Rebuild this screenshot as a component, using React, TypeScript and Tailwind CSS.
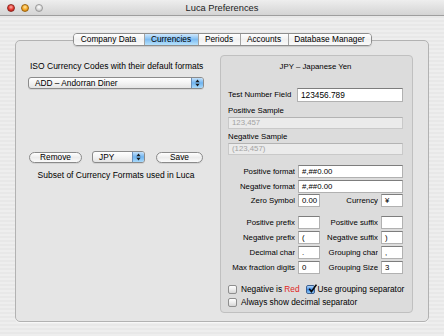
import React from 'react';

const tabs = [
  { label: 'Company Data', w: 'w-[70px]' },
  { label: 'Currencies', w: 'w-[54px]', active: true },
  { label: 'Periods', w: 'w-[42px]' },
  { label: 'Accounts', w: 'w-[48px]' },
  { label: 'Database Manager', w: 'w-[83px]' },
];

function Arrows() {
  return (
    <svg width="5" height="8" viewBox="0 0 5 8">
      <path d="M2.5 0.5 L4.6 3.2 L0.4 3.2 Z" fill="#1a1a1a" />
      <path d="M2.5 7.5 L4.6 4.8 L0.4 4.8 Z" fill="#1a1a1a" />
    </svg>
  );
}

function Popup({ label, className = '' }: { label: string; className?: string }) {
  return (
    <div
      className={`flex h-[12px] items-stretch overflow-hidden rounded-[3px] border border-[#8b8b8b] bg-gradient-to-b from-white via-[#f3f3f3] to-[#e4e4e4] shadow-[0_1px_0_rgba(0,0,0,0.08)] ${className}`}
    >
      <span className="flex-1 truncate pl-[6px] text-[8.3px] leading-[10px]">{label}</span>
      <span className="flex w-[12px] items-center justify-center border-l border-[#6c8fb8] bg-gradient-to-b from-[#c4e1fa] via-[#6fb4f0] to-[#a9dafb]">
        <Arrows />
      </span>
    </div>
  );
}

function Button({ label, className = '' }: { label: string; className?: string }) {
  return (
    <div
      className={`flex h-[11px] items-center justify-center rounded-full border border-[#8a8a8a] bg-gradient-to-b from-white via-[#ececec] to-[#fbfbfb] text-[8.3px] leading-[10px] shadow-[0_1px_0_rgba(0,0,0,0.08)] ${className}`}
    >
      {label}
    </div>
  );
}

function Field({ value = '', className = '' }: { value?: string; className?: string }) {
  return (
    <div
      className={`h-[13px] border border-[#b1b1b1] border-t-[#7d7d7d] bg-white pl-[3px] text-[7.8px] leading-[11px] ${className}`}
    >
      {value}
    </div>
  );
}

function SampleField({ value }: { value: string }) {
  return (
    <div className="h-[12px] border border-[#c9c9c9] border-t-[#b3b3b3] bg-[#ebebeb] pl-[3px] text-[7.8px] leading-[10px] text-[#a3a3a3]">
      {value}
    </div>
  );
}

function Checkbox({ checked = false }: { checked?: boolean }) {
  if (checked) {
    return (
      <span className="relative flex h-[9px] w-[9px] shrink-0 items-center justify-center rounded-[2px] border border-[#3d5f8f] bg-gradient-to-b from-[#b5dafb] via-[#3f8ae4] to-[#8cc8f7]">
        <svg width="9" height="9" viewBox="0 0 9 9" className="absolute -top-[2px] left-[1px]">
          <path d="M1.2 4.8 L3.4 7.6 L8.4 0.6" stroke="#0b0b0b" strokeWidth="1.6" fill="none" />
        </svg>
      </span>
    );
  }
  return (
    <span className="h-[9px] w-[9px] shrink-0 rounded-[2px] border border-[#8e8e8e] bg-gradient-to-b from-white via-[#ededed] to-[#d6d6d6]" />
  );
}

function Label({ children }: { children: React.ReactNode }) {
  return <span className="truncate text-right text-[7.8px] leading-[13px]">{children}</span>;
}

export default function App() {
  return (
    <div className="h-[336px] w-[444px] overflow-hidden bg-[image:repeating-linear-gradient(0deg,#eeeeee_0px,#eeeeee_2px,#e8e8e8_2px,#e8e8e8_4px)] font-['Liberation_Sans',Arial,sans-serif] text-black">
      {/* title bar */}
      <div className="grid h-[16px] grid-cols-[60px_1fr_60px] items-center border-b border-[#9e9e9e] bg-gradient-to-b from-[#eeeeee] to-[#d4d4d4]">
        <div className="flex items-center gap-[6px] pl-[7px]">
          <span className="h-[8px] w-[8px] rounded-full border border-[#8c2a24] bg-[radial-gradient(circle_at_50%_35%,#ffb0a8,#e5332a_55%,#a0160f)]" />
          <span className="h-[8px] w-[8px] rounded-full border border-[#9a6410] bg-[radial-gradient(circle_at_50%_35%,#ffe6a0,#f5a623_55%,#b86e05)]" />
          <span className="h-[8px] w-[8px] rounded-full border border-[#9a9a9a] bg-[radial-gradient(circle_at_50%_35%,#ffffff,#d8d8d8_55%,#b0b0b0)]" />
        </div>
        <div className="text-center text-[9.3px] leading-[12px] text-[#222]">Luca Preferences</div>
        <div />
      </div>

      <div className="px-[15px] pt-[17px]">
        {/* tabs */}
        <div className="relative z-10 flex justify-center">
          <div className="flex h-[13px] overflow-hidden rounded-[4px] border border-[#8d8d8d] shadow-[0_1px_1px_rgba(0,0,0,0.12)]">
            {tabs.map((t, i) => (
              <div
                key={t.label}
                className={`${t.w} flex items-center justify-center text-[8.3px] leading-[11px] ${i > 0 ? 'border-l border-[#a3a3a3]' : ''} ${
                  t.active
                    ? 'bg-gradient-to-b from-[#cfe8fc] via-[#7fbdf2] to-[#b7e2fc]'
                    : 'bg-gradient-to-b from-white via-[#f1f1f1] to-[#fafafa]'
                }`}
              >
                {t.label}
              </div>
            ))}
          </div>
        </div>

        {/* tab panel */}
        <div className="-mt-[6px] flex h-[282px] gap-[16px] rounded-[5px] border border-[#b2b2b2] bg-[#e5e5e5] pl-[12px] pr-[15px] pt-[14px] shadow-[0_1px_0_rgba(255,255,255,0.6)]">
          {/* left column */}
          <div className="flex w-[176px] flex-col">
            <div className="mt-[6px] h-[10px] whitespace-nowrap pl-[2px] text-[8.5px] leading-[10px]">ISO Currency Codes with their default formats</div>
            <Popup label="ADD – Andorran Diner" className="mt-[6px] w-[176px]" />
            <div className="mt-[62px] flex items-center">
              <Button label="Remove" className="ml-[1px] w-[53px]" />
              <Popup label="JPY" className="ml-[10px] w-[53px]" />
              <Button label="Save" className="ml-[11px] w-[47px]" />
            </div>
            <div className="mt-[7px] text-center text-[8.5px] leading-[10px]">Subset of Currency Formats used in Luca</div>
          </div>

          {/* currency detail box */}
          <div className="flex h-[258px] w-[193px] flex-col rounded-[4px] border border-[#c0c0c0] bg-[#dcdcdc] pl-[7px] pr-[9px] pt-[6px]">
            <div className="text-center text-[7.8px] leading-[10px]">JPY – Japanese Yen</div>

            <div className="mt-[16px] flex h-[14px] items-center justify-between">
              <span className="text-[7.8px] leading-[10px]">Test Number Field</span>
              <Field value="123456.789" className="h-[14px] w-[106px] text-[8.3px] leading-[12px]" />
            </div>

            <div className="mt-[4px] text-[7.8px] leading-[10px]">Positive Sample</div>
            <div className="mt-[1px]"><SampleField value="123,457" /></div>
            <div className="mt-[3px] text-[7.8px] leading-[10px]">Negative Sample</div>
            <div className="mt-[1px]"><SampleField value="(123,457)" /></div>

            <div className="mt-[10px] grid grid-cols-[67px_22px_55px_22px] gap-x-[3px] gap-y-[1.5px]">
              <Label>Positive format</Label>
              <Field value="#,##0.00" className="col-span-3" />
              <Label>Negative format</Label>
              <Field value="#,##0.00" className="col-span-3" />
              <Label>Zero Symbol</Label>
              <Field value="0.00" />
              <Label>Currency</Label>
              <Field value="¥" />
            </div>

            <div className="mt-[9px] grid grid-cols-[67px_22px_55px_22px] gap-x-[3px] gap-y-[2px]">
              <Label>Positive prefix</Label>
              <Field />
              <Label>Positive suffix</Label>
              <Field />
              <Label>Negative prefix</Label>
              <Field value="(" />
              <Label>Negative suffix</Label>
              <Field value=")" />
              <Label>Decimal char</Label>
              <Field value="." />
              <Label>Grouping char</Label>
              <Field value="," />
              <Label>Max fraction digits</Label>
              <Field value="0" />
              <Label>Grouping Size</Label>
              <Field value="3" />
            </div>

            <div className="mt-[10px] flex h-[10px] items-center whitespace-nowrap text-[8.3px] leading-[10px]">
              <Checkbox />
              <span className="ml-[4px] shrink-0">Negative is <span className="text-[#e0241c]">Red</span></span>
              <span className="ml-[6px] shrink-0"><Checkbox checked /></span>
              <span className="ml-[3px] shrink-0">Use grouping separator</span>
            </div>
            <div className="mt-[3px] flex h-[10px] items-center whitespace-nowrap text-[8.3px] leading-[10px]">
              <Checkbox />
              <span className="ml-[4px]">Always show decimal separator</span>
            </div>
          </div>
        </div>
      </div>
    </div>
  );
}
